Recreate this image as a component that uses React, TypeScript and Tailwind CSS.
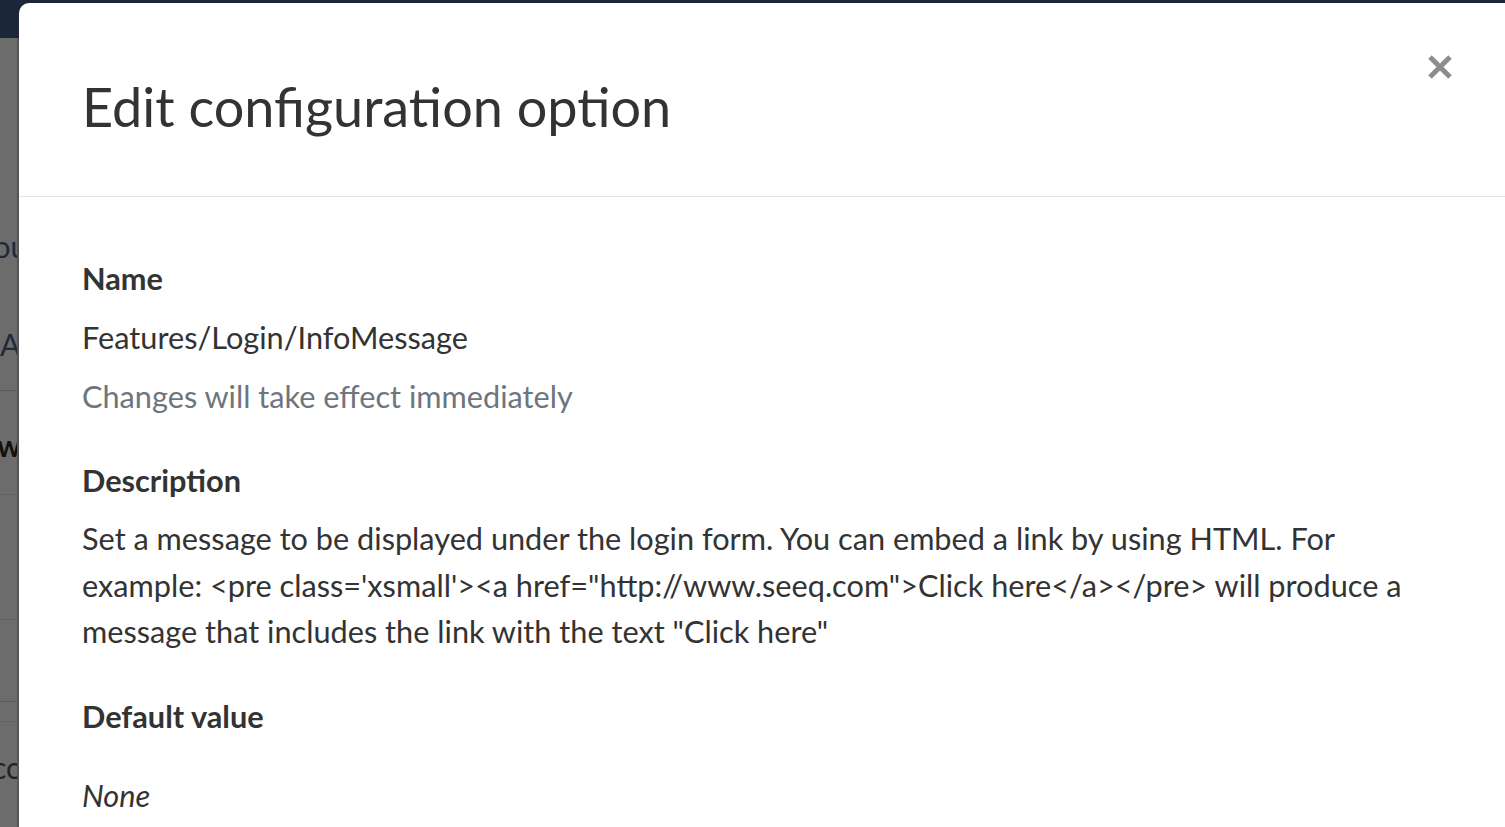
export default function App() {
  return (
    <div className="relative h-[827px] w-[1505px] overflow-hidden bg-[#6c6c6c] font-['Lato',sans-serif] text-[#333]">
      {/* page behind the modal */}
      <div className="h-[38px] bg-[#1b2739]" />
      <div className="flex w-[19px] flex-col overflow-hidden text-[30px] leading-none text-[#1e2a3a]">
        <div className="-ml-[22px] mt-[193px] h-[30px] whitespace-nowrap">You</div>
        <div className="mt-[68px] h-[30px] whitespace-nowrap">Add</div>
        <div className="mt-[31px] h-px bg-[#5a5a5a]" />
        <div className="-ml-[3px] mt-[39px] h-[30px] whitespace-nowrap font-bold text-[#111]">wo</div>
        <div className="mt-[34px] h-px bg-[#606060]" />
        <div className="mt-[124px] h-px bg-[#606060]" />
        <div className="mt-[81px] h-px bg-[#5a5a5a]" />
        <div className="mt-[19px] h-px bg-[#646464]" />
        <div className="-ml-[8px] mt-[30px] h-[30px] whitespace-nowrap text-[#222]">co</div>
      </div>
      <div className="absolute left-[17px] top-[38px] h-[789px] w-[2px] bg-[#555]" />

      {/* modal */}
      <div className="absolute left-[19px] top-[3px] h-[900px] w-[1520px] rounded-tl-[10px] bg-white">
        <div className="relative h-[194px] border-b border-[#e5e5e5] pl-[63px]">
          <h1 className="pt-[72px] text-[54px] leading-[64px] font-normal text-[#333]">
            Edit configuration option
          </h1>
          <svg
            className="absolute left-[1408px] top-[51px]"
            width="26"
            height="26"
            viewBox="0 0 26 26"
          >
            <path d="M3 3 L23 23 M23 3 L3 23" stroke="#8c8c8c" strokeWidth="5" />
          </svg>
        </div>
        <div className="pl-[63px] text-[30.7px] leading-[46px]">
          <div className="mt-[59px] font-bold">Name</div>
          <div className="mt-[13px]">Features/Login/InfoMessage</div>
          <div className="mt-[13px] text-[#6e757d]">Changes will take effect immediately</div>
          <div className="mt-[38px] font-bold">Description</div>
          <p className="mt-[12px] w-[1360px] leading-[46.5px]">
            Set a message to be displayed under the login form. You can embed a link by using HTML. For
            example: &lt;pre class='xsmall'&gt;&lt;a href="http://www.seeq.com"&gt;Click here&lt;/a&gt;&lt;/pre&gt; will produce a
            message that includes the link with the text "Click here"
          </p>
          <div className="mt-[38px] font-bold">Default value</div>
          <div className="mt-[33px] italic">None</div>
        </div>
      </div>
    </div>
  );
}
